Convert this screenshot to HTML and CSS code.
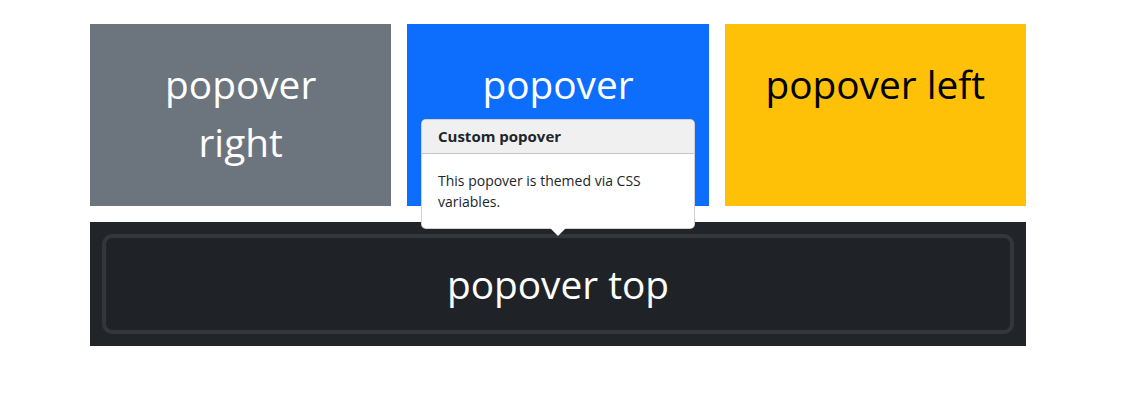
FILE: index.html
```html
<!DOCTYPE html>
<html lang="en">
<head>
    <meta charset="UTF-8">
    <meta name="viewport" content="width=device-width, initial-scale=1.0">
    <title>Popovers</title>
    <link rel="stylesheet" href="styles.css">
</head>
<body>

<div class="container">
    <div class="row">
        <div class="box box-secondary">popover right</div>
        <div class="box box-primary">popover bottom</div>
        <div class="box box-warning">popover left</div>
    </div>

    <div class="dark-wrap">
        <button class="btn-top">popover top</button>
    </div>

    <!-- custom popover, shown above the "popover top" button -->
    <div class="popover">
        <div class="popover-header">Custom popover</div>
        <div class="popover-body">This popover is themed via CSS variables.</div>
    </div>
</div>

</body>
</html>
```

FILE: styles.css
```css
body {
    font-family: "Open Sans", "Noto Sans", sans-serif;
    margin: 0;
    background-color: #fff;
    color: #212529;
}
.container {
    position: relative;
    width: 936px;
    margin: 24px 0 0 90px;
}
.row {
    display: grid;
    grid-template-columns: repeat(3, 1fr);
    gap: 16px;
}
.box {
    min-height: 182px;
    box-sizing: border-box;
    padding: 31px 32px;
    font-size: 38.8px;
    line-height: 1.5;
    text-align: center;
}
.box-secondary {
    background-color: #6c757d;
    color: #fff;
}
.box-primary {
    background-color: #0d6efd;
    color: #fff;
}
.box-warning {
    background-color: #ffc107;
    color: #000;
}
.dark-wrap {
    margin-top: 16px;
    padding: 16px;
    background-color: #212529;
}
.btn-top {
    display: block;
    width: 100%;
    padding: 16px;
    border: 1px solid #212529;
    border-radius: 6px;
    background-color: #1f2226;
    color: #fff;
    font-family: inherit;
    font-size: 38.8px;
    line-height: 1.5;
    box-shadow: 0 0 0 4px #33373b;
    cursor: pointer;
}
.popover {
    position: absolute;
    left: 331px;
    top: 95px;
    width: 274px;
    box-sizing: border-box;
    background-color: #fff;
    border: 1px solid rgba(0,0,0,0.175);
    border-radius: 5px;
    font-size: 14px;
}
.popover::before,
.popover::after {
    content: "";
    position: absolute;
    left: 128px;
    border-style: solid;
    border-color: transparent;
    border-width: 8px 8px 0;
}
.popover::before {
    bottom: -9px;
    border-top-color: rgba(0,0,0,0.175);
}
.popover::after {
    bottom: -8px;
    border-top-color: #fff;
}
.popover-header {
    padding: 8px 16px;
    background-color: #f0f0f0;
    border-bottom: 1px solid rgba(0,0,0,0.175);
    border-radius: 4px 4px 0 0;
    font-size: 15px;
    font-weight: 700;
    line-height: 17px;
}
.popover-body {
    padding: 16px;
    line-height: 1.5;
}
```
